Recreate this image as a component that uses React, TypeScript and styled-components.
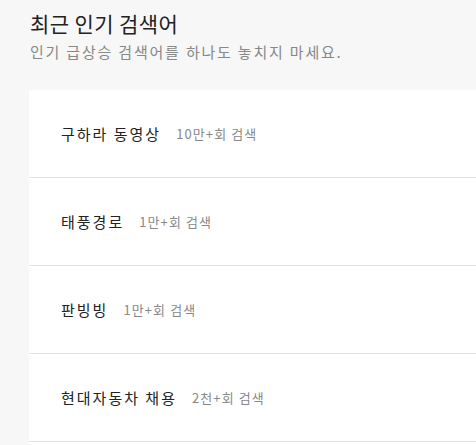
import React from 'react';
import styled, { createGlobalStyle } from 'styled-components';

const GlobalStyle = createGlobalStyle`
  html, body {
    margin: 0;
    padding: 0;
    background-color: #f7f7f7;
    overflow: hidden;
  }
  body {
    font-family: "Noto Sans CJK KR", "Noto Sans", sans-serif;
  }
`;

const Container = styled.div`
  width: 100vw;
  min-height: 100vh;
  background-color: #f7f7f7;
  padding: 8px 0 0 29px;
  box-sizing: border-box;
`;

const Title = styled.h2`
  margin: 0;
  padding-left: 1px;
  font-size: 21px;
  line-height: 30px;
  font-weight: 400;
  letter-spacing: 0.4px;
  color: #222;
`;

const Subtitle = styled.p`
  margin: 3px 0 0;
  padding-left: 1px;
  font-size: 15px;
  line-height: 22px;
  letter-spacing: 1.8px;
  color: #888;
`;

const Card = styled.ul`
  list-style: none;
  margin: 27px 0 0;
  padding: 0 0 20px;
  background-color: #fff;
`;

const Row = styled.li`
  display: flex;
  align-items: center;
  height: 87px;
  padding-left: 32px;
  border-bottom: 1px solid #e3e3e3;
`;

const Keyword = styled.span`
  font-size: 15px;
  letter-spacing: 2px;
  color: #222;
`;

const Count = styled.span`
  margin-left: 15px;
  font-size: 13px;
  letter-spacing: 1.1px;
  color: #888;
`;

const keywords = [
  { name: '구하라 동영상', count: '10만+회 검색' },
  { name: '태풍경로', count: '1만+회 검색' },
  { name: '판빙빙', count: '1만+회 검색' },
  { name: '현대자동차 채용', count: '2천+회 검색' },
];

const App: React.FC = () => {
  return (
    <>
      <GlobalStyle />
      <Container>
        <Title>최근 인기 검색어</Title>
        <Subtitle>인기 급상승 검색어를 하나도 놓치지 마세요.</Subtitle>
        <Card>
          {keywords.map((k) => (
            <Row key={k.name}>
              <Keyword>{k.name}</Keyword>
              <Count>{k.count}</Count>
            </Row>
          ))}
        </Card>
      </Container>
    </>
  );
};

export default App;
